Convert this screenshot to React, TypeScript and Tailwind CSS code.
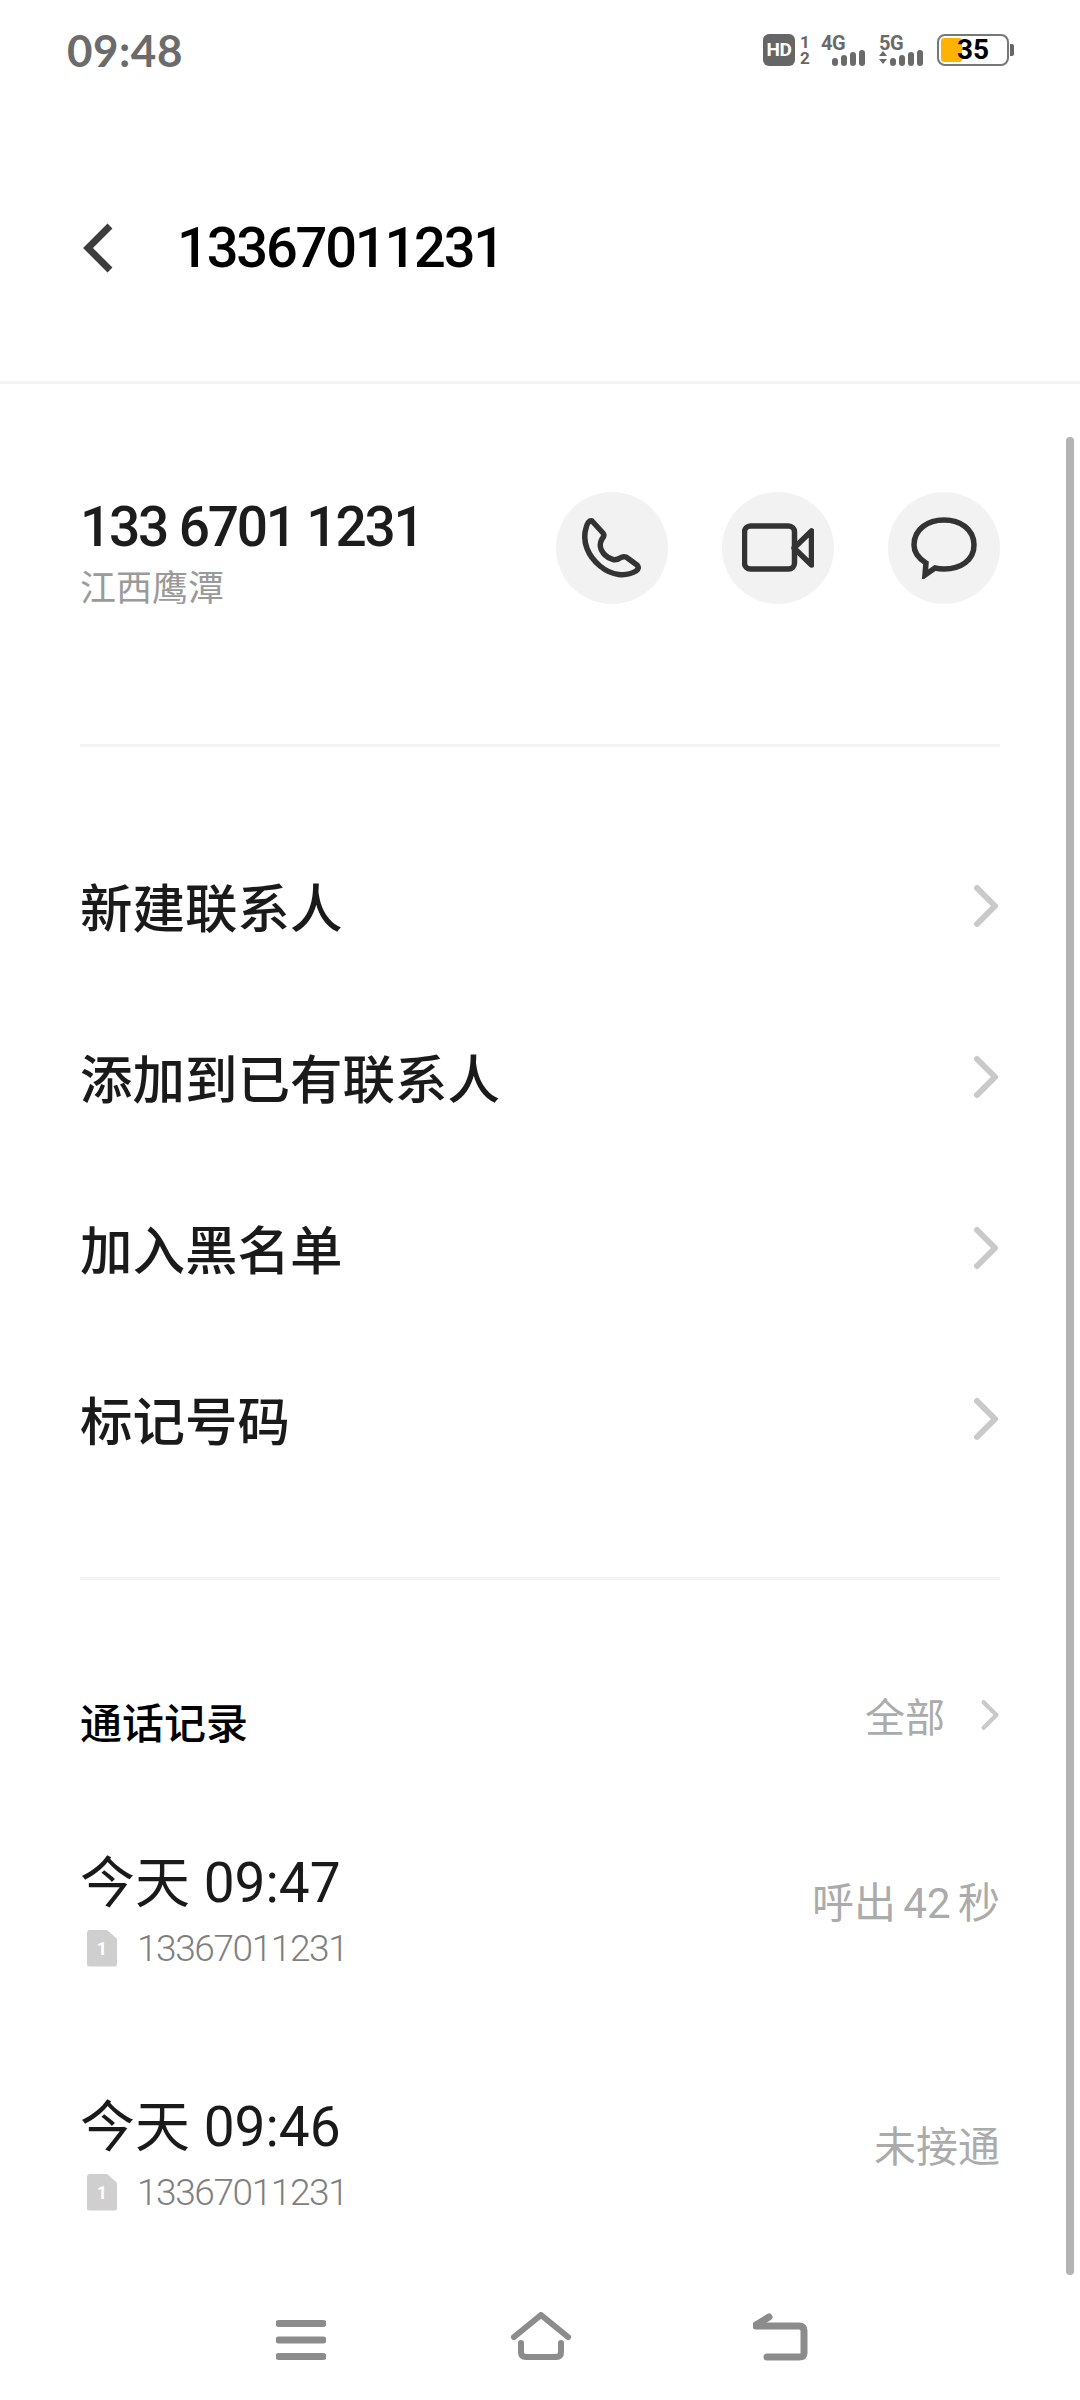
const CJK = "font-['Noto_Sans_CJK_SC','Noto_Sans',sans-serif]"

const ROWS = ['新建联系人', '添加到已有联系人', '加入黑名单', '标记号码']

const CALLS = [
  { time: '今天 09:47', result: '呼出 42 秒' },
  { time: '今天 09:46', result: '未接通' },
]

function Chevron({ className }: { className: string }) {
  return (
    <svg viewBox="0 0 28 44" fill="none" className={className}>
      <path d="M5 4 L23 22 L5 40" stroke="#c9c9c9" strokeWidth="6" strokeLinecap="round" strokeLinejoin="round" />
    </svg>
  )
}

function Signal({ label, arrows }: { label: string; arrows?: boolean }) {
  const bars = [8, 11, 14, 16]
  return (
    <div className="relative w-[44px] h-[32px]">
      <span className="absolute left-0 top-[-1px] text-[20px] leading-[20px] font-bold tracking-[-0.5px] text-[#6a6a6a] font-['Roboto',sans-serif]">{label}</span>
      {arrows && (
        <svg viewBox="0 0 8 14" className="absolute left-0 top-[17px] w-[8px] h-[14px]">
          <path d="M4 0 L8 5 H0Z M0 8 H8 L4 13Z" fill="#6a6a6a" />
        </svg>
      )}
      <div className="absolute right-0 bottom-0 flex items-end gap-[3px]">
        {bars.map((h, i) => (
          <div key={i} className="w-[6px] bg-[#6a6a6a] rounded-[3px]" style={{ height: h }} />
        ))}
      </div>
    </div>
  )
}

function StatusBar() {
  return (
    <div className="h-[100px] pl-[67px] pr-[66px] pt-[34px] flex justify-between items-start">
      <span className="text-[44px] leading-[32px] font-bold tracking-[0.5px] text-[#6b6b6b] font-['Lato',sans-serif]">09:48</span>
      <div className="flex items-center h-[32px]">
        <div className="w-[32px] h-[32px] rounded-[6px] bg-[#666666] text-white text-[19px] font-bold tracking-[-0.5px] flex items-center justify-center font-['Roboto',sans-serif]">HD</div>
        <div className="ml-[4px] w-[12px] flex flex-col items-center text-[17px] leading-[16px] font-bold text-[#666666] font-['Roboto',sans-serif]">
          <span>1</span>
          <span>2</span>
        </div>
        <div className="ml-[10px]">
          <Signal label="4G" />
        </div>
        <div className="ml-[14px]">
          <Signal label="5G" arrows />
        </div>
        <div className="ml-[14px] relative w-[72px] h-[32px] rounded-[8px] border-2 border-[#777777] bg-white overflow-hidden">
          <div className="absolute left-[2px] top-[2px] bottom-[2px] w-[21px] bg-[#ffb300] rounded-[3px]" />
          <span className="absolute left-[18px] top-0 text-[28px] leading-[28px] font-bold text-black font-['Roboto',sans-serif]">35</span>
        </div>
        <div className="w-[4px] h-[12px] bg-[#666666] rounded-r-[2px] ml-[1px]" />
      </div>
    </div>
  )
}

function ActionButton({ children }: { children: React.ReactNode }) {
  return <div className="w-[112px] h-[112px] rounded-full bg-[#f2f2f2] flex items-center justify-center">{children}</div>
}

export default function App() {
  return (
    <div className={`relative w-[1080px] h-[2400px] bg-white overflow-hidden flex flex-col ${CJK}`}>
      <StatusBar />

      <header className="h-[284px] pt-[14px] flex items-center border-b-[3px] border-[#f3f3f3] pl-[82px]">
        <svg viewBox="0 0 32 52" fill="none" className="w-[32px] h-[52px]">
          <path d="M28 4 L6 26 L28 48" stroke="#3d3d3d" strokeWidth="7" strokeLinejoin="miter" />
        </svg>
        <h1 className="ml-[63px] text-[56px] leading-none font-medium tracking-[-2.2px] text-black font-['Roboto',sans-serif]">13367011231</h1>
      </header>

      <section className="mx-[80px] h-[363px] border-b-[3px] border-[#f3f3f3] flex justify-between pt-[106px]">
        <div>
          <div className="text-[55px] leading-[68px] font-medium tracking-[-2.2px] text-[#1c1c1c] font-['Roboto',sans-serif] mt-[3px]">133 6701 1231</div>
          <div className="text-[36px] leading-[44px] text-[#9a9a9a] mt-[2px]">江西鹰潭</div>
        </div>
        <div className="flex gap-[54px] mt-[2px] ml-[1px]">
          <ActionButton>
            <svg viewBox="0 0 60 60" fill="none" className="w-[60px] h-[60px]">
              <path d="M10 3 L21 15 Q23 18 20 21 C17 26 18 32 23 37 C28 42 34 43 38 40 Q41 38 44 39 L55 47 Q58 50 54 53 C44 59 30 58 18 48 C6 38 0 24 4 10 Q6 2 10 3Z" stroke="#333333" strokeWidth="5.5" strokeLinejoin="round" />
            </svg>
          </ActionButton>
          <ActionButton>
            <svg viewBox="0 0 72 50" fill="none" className="w-[72px] h-[50px]">
              <rect x="2.5" y="3" width="50" height="43" rx="6" stroke="#333333" strokeWidth="5.5" />
              <path d="M52 25 L69.5 8 V42 Z" stroke="#333333" strokeWidth="5.5" strokeLinejoin="round" />
            </svg>
          </ActionButton>
          <ActionButton>
            <svg viewBox="0 0 66 62" fill="none" className="w-[66px] h-[62px]">
              <path d="M33 3 C49 3 63 12 63 28 C63 43 50 52 33 52 Q28 52 24 51 L14 58 L15 46 C7 41 3 35 3 28 C3 12 17 3 33 3Z" stroke="#333333" strokeWidth="5.5" strokeLinejoin="miter" />
            </svg>
          </ActionButton>
        </div>
      </section>

      <section className="mx-[80px] h-[833px] border-b-[3px] border-[#f3f3f3] pt-[73px]">
        {ROWS.map(label => (
          <div key={label} className="h-[171px] flex items-center justify-between">
            <span className="text-[52.5px] leading-none font-medium text-[#1a1a1a]">{label}</span>
            <Chevron className="w-[28px] h-[44px]" />
          </div>
        ))}
      </section>

      <section className="mx-[80px] flex justify-between items-start pt-[110px]">
        <span className="text-[42px] leading-[56px] font-medium text-black mt-[3px]">通话记录</span>
        <div className="flex items-center h-[50px]">
          <span className="text-[40px] leading-none text-[#ababab]">全部</span>
          <Chevron className="ml-[35px] w-[20px] h-[36px]" />
        </div>
      </section>

      <section className="mx-[80px] mt-[98px]">
        {CALLS.map(call => (
          <div key={call.time} className="h-[244px] flex justify-between items-start">
            <div>
              <div className="text-[55px] leading-[72px] text-[#1a1a1a] font-['Roboto','Noto_Sans_CJK_SC',sans-serif]">{call.time}</div>
              <div className="flex items-center mt-[7px] h-[44px]">
                <div className="ml-[7px] w-[30px] h-[37px] bg-[#cfcfcf] rounded-[3px] [clip-path:polygon(0_0,65%_0,100%_25%,100%_100%,0_100%)] flex items-center justify-center text-[18px] font-bold text-white font-['Roboto',sans-serif]">1</div>
                <span className="ml-[20px] text-[37px] leading-none tracking-[-1.4px] font-light text-[#7f7f7f] font-['Roboto',sans-serif]">13367011231</span>
              </div>
            </div>
            <span className="mt-[29px] text-[42px] leading-[56px] [word-spacing:-3px] text-[#ababab] font-['Roboto','Noto_Sans_CJK_SC',sans-serif]">{call.result}</span>
          </div>
        ))}
      </section>

      <div className="absolute left-[1066px] top-[437px] w-[8px] h-[1838px] rounded-full bg-[#b3b3b3]" />

      <nav className="absolute left-0 right-0 bottom-0 h-[110px] bg-white">
        <div className="ml-[276px] mt-[30px] flex items-start">
          <svg viewBox="0 0 50 40" className="w-[50px] h-[40px]">
            <path d="M3 3.5 H47 M3 20 H47 M3 36.5 H47" stroke="#8c8c8c" strokeWidth="7" strokeLinecap="round" />
          </svg>
          <svg viewBox="0 0 64 50" fill="none" className="ml-[184px] mt-[-8px] w-[64px] h-[50px]">
            <path d="M4 25 L31 3 L58 25 M11 31 V40 Q11 45 16 45 H46 Q51 45 51 40 V31" stroke="#8c8c8c" strokeWidth="6" strokeLinecap="round" strokeLinejoin="round" />
          </svg>
          <svg viewBox="0 0 56 50" fill="none" className="ml-[179px] mt-[-8px] w-[56px] h-[50px]">
            <path d="M3 14 H46 Q51 14 51 19 V41 Q51 45 46 45 H14" stroke="#8c8c8c" strokeWidth="7" strokeLinecap="round" />
            <path d="M3 13 L16 5" stroke="#8c8c8c" strokeWidth="7" strokeLinecap="round" />
          </svg>
        </div>
      </nav>
    </div>
  )
}
